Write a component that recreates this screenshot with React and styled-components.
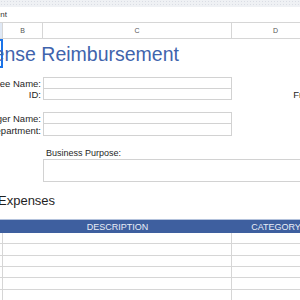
import styled, { createGlobalStyle } from "styled-components";

const GlobalStyle = createGlobalStyle`
  html, body {
    margin: 0;
    padding: 0;
    background: #ffffff;
    font-family: "Liberation Sans", Arial, sans-serif;
    overflow: hidden;
  }
`;

const COLS = "60px 40px 189px 88px 90px";

const Page = styled.div`
  width: 300px;
  height: 300px;
  overflow: hidden;
  background: #ffffff;
`;

const Ribbon = styled.div`
  height: 7px;
  background-color: #eff1f4;
  background-image: radial-gradient(#dadde4 1px, transparent 1px);
  background-size: 3px 3px;
`;

const FileBar = styled.div`
  height: 15px;
  width: 7px;
  display: flex;
  align-items: center;
  justify-content: flex-end;
  white-space: nowrap;
  font-size: 8px;
  color: #333333;
`;

const Sheet = styled.div`
  margin-left: -57px;
  width: 470px;
`;

const Row = styled.div`
  display: grid;
  grid-template-columns: ${COLS};
  height: ${(p) => p.$h}px;
`;

const HeaderRow = styled(Row)`
  border-top: 1px solid #d6d6d6;
  border-bottom: 1px solid #d6d6d6;
  box-sizing: border-box;
`;

const ColHead = styled.div`
  display: flex;
  align-items: center;
  justify-content: center;
  font-size: 7px;
  color: #555555;
  border-right: 1px solid #d6d6d6;
  background: ${(p) => (p.$selected ? "#dfe8f5" : "#ffffff")};
`;

const Cell = styled.div`
  grid-column: ${(p) => p.$col} / span ${(p) => p.$span || 1};
  display: flex;
  align-items: center;
  justify-content: ${(p) => (p.$right ? "flex-end" : "flex-start")};
  white-space: nowrap;
  min-width: 0;
  font-size: 9px;
  color: #1f1f1f;
  padding: 0 ${(p) => (p.$right ? "2px" : "0")} 0 ${(p) => (p.$right ? "0" : "3px")};
`;

const Label = styled(Cell)`
  font-size: 9.5px;
`;

const TitleCell = styled(Cell)`
  border: 2px solid #1a73e8;
  box-sizing: border-box;
  font-size: 19.5px;
  color: #3f64ad;
  padding-left: 15px;
  padding-top: 2px;
`;

const Field = styled.div`
  grid-column: ${(p) => p.$col} / span ${(p) => p.$span || 1};
  border: 1px solid #d2d2d2;
  border-top: ${(p) => (p.$first ? "1px solid #d2d2d2" : "none")};
  box-sizing: border-box;
  background: #ffffff;
`;

const SectionTitle = styled(Cell)`
  font-size: 13px;
  color: #1f1f1f;
  padding-left: 55px;
`;

const TableHead = styled(Row)`
  background: #3e5f9f;
  border-top: 1px solid #b3c2dc;
  box-sizing: border-box;
`;

const HeadCell = styled.div`
  grid-column: ${(p) => p.$col} / span ${(p) => p.$span || 1};
  display: flex;
  align-items: center;
  justify-content: center;
  white-space: nowrap;
  font-size: 9px;
  color: #e9eef7;
`;

const TableRow = styled(Row)`
  border-bottom: 1px solid #d6d6d6;
  box-sizing: border-box;
`;

const TableCell = styled.div`
  grid-column: ${(p) => p.$col} / span ${(p) => p.$span || 1};
  border-right: 1px solid #d6d6d6;
`;

export default function App() {
  const rows = [11, 12, 11, 11, 12, 12];
  return (
    <Page>
      <GlobalStyle />
      <Ribbon />
      <FileBar>Expense Reimbursement</FileBar>
      <Sheet>
        <HeaderRow $h={17}>
          <ColHead $selected>A</ColHead>
          <ColHead>B</ColHead>
          <ColHead>C</ColHead>
          <ColHead>D</ColHead>
          <ColHead>E</ColHead>
        </HeaderRow>

        <Row $h={27}>
          <TitleCell $col={1}>Expense Reimbursement</TitleCell>
        </Row>
        <Row $h={11} />

        <Row $h={12}>
          <Label $col={2} $right>Employee Name:</Label>
          <Field $col={3} $first />
        </Row>
        <Row $h={11}>
          <Label $col={2} $right>ID:</Label>
          <Field $col={3} />
          <Label $col={4} $right>From:</Label>
        </Row>
        <Row $h={12} />

        <Row $h={12}>
          <Label $col={2} $right>Manager Name:</Label>
          <Field $col={3} $first />
        </Row>
        <Row $h={12}>
          <Label $col={2} $right>Department:</Label>
          <Field $col={3} />
        </Row>
        <Row $h={11} />

        <Row $h={12}>
          <Cell $col={3}>Business Purpose:</Cell>
        </Row>
        <Row $h={23}>
          <Field $col={3} $span={3} $first />
        </Row>
        <Row $h={8} />

        <Row $h={21}>
          <SectionTitle $col={1} $span={2}>Expenses</SectionTitle>
        </Row>
        <Row $h={8} />

        <TableHead $h={14}>
          <HeadCell $col={1}>DATE</HeadCell>
          <HeadCell $col={2} $span={2}>DESCRIPTION</HeadCell>
          <HeadCell $col={4}>CATEGORY</HeadCell>
          <HeadCell $col={5}>COST</HeadCell>
        </TableHead>
        {rows.map((h, i) => (
          <TableRow key={i} $h={h}>
            <TableCell $col={1} />
            <TableCell $col={2} $span={2} />
            <TableCell $col={4} />
            <TableCell $col={5} />
          </TableRow>
        ))}
      </Sheet>
    </Page>
  );
}
